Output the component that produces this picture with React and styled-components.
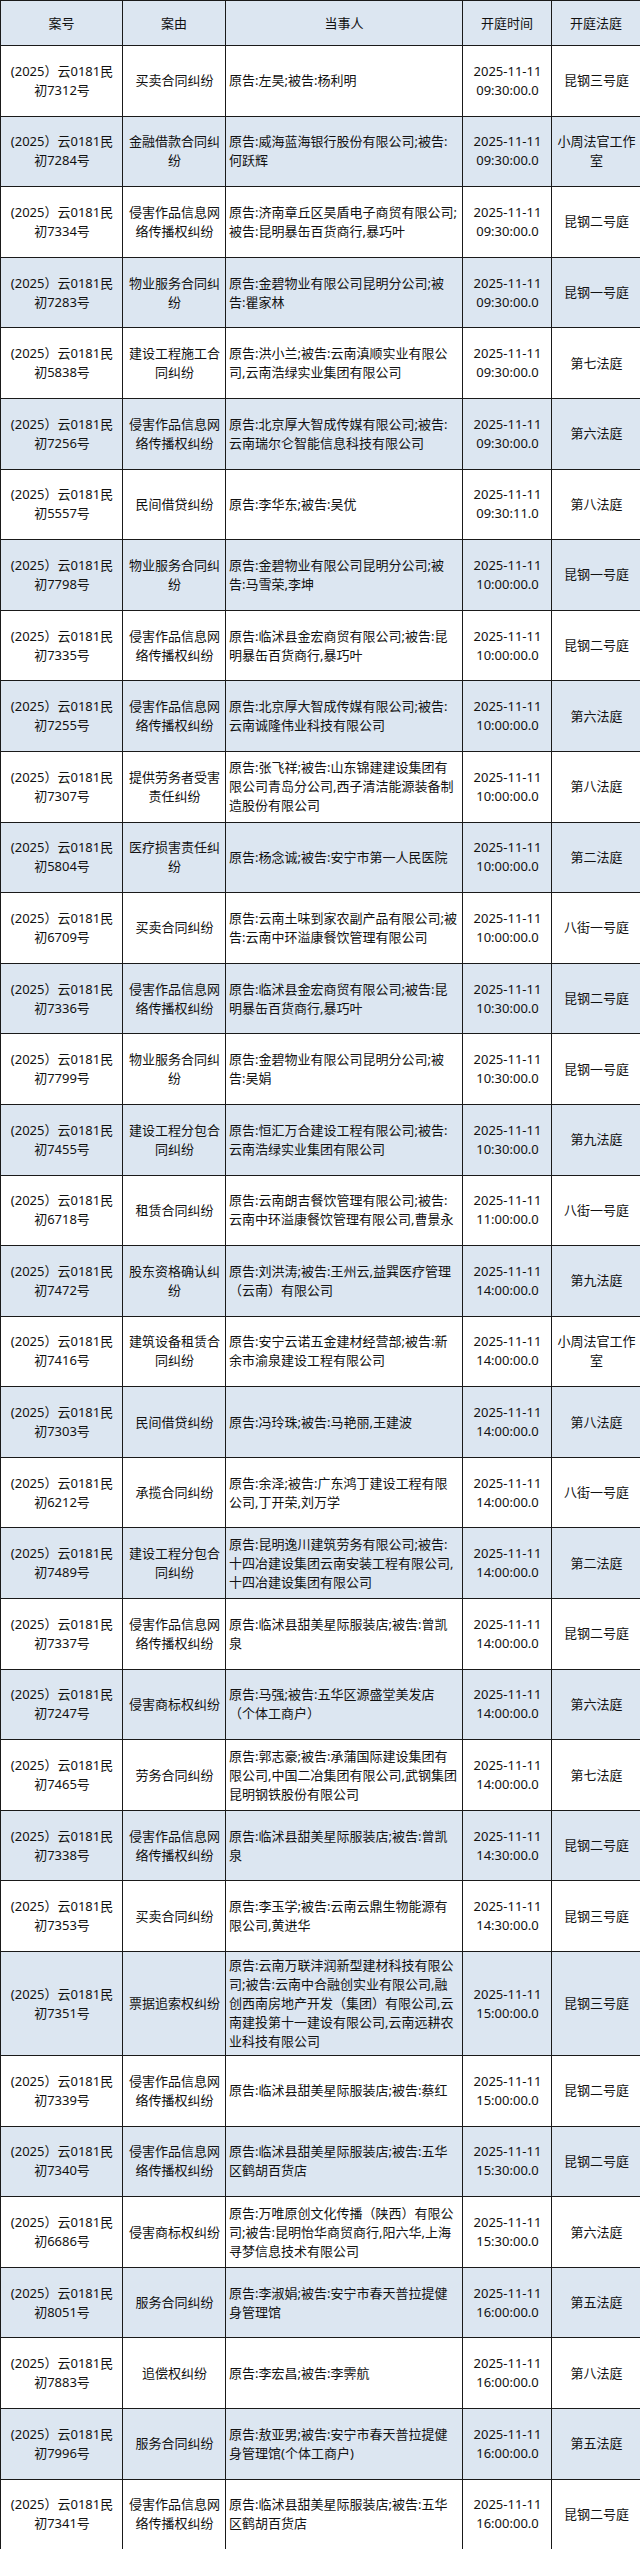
import React from 'react';
import styled, {createGlobalStyle} from 'styled-components';

const GlobalStyle = createGlobalStyle`
  body {
    margin: 0;
    background: #ffffff;
  }
`;

const Table = styled.table`
  width: 640px;
  border-collapse: collapse;
  table-layout: fixed;
  font-family: "Noto Sans", "Noto Sans CJK SC", sans-serif;
  font-size: 13px;
  line-height: 19px;
  color: #111111;
`;

const Col = styled.col`
  width: ${(p) => p.$w}px;
`;

const HeadRow = styled.tr`
  height: 45px;
  background: #dce6f1;
`;

const HeadCell = styled.th`
  border: 1px solid #1a1a1a;
  font-weight: normal;
  text-align: center;
  padding: 0 3px;
`;

const Row = styled.tr`
  height: 70.6px;
  background: ${(p) => (p.$alt ? '#dce6f1' : '#ffffff')};
`;

const Cell = styled.td`
  border: 1px solid #1a1a1a;
  padding: 4px 2px 4px 3px;
  text-align: ${(p) => p.$align || 'center'};
  vertical-align: middle;
  white-space: pre-line;
  word-break: break-all;
`;

const rows = [
  ['7312', '买卖合同纠纷', '原告:左昊;被告:杨利明', '09:30:00.0', '昆钢三号庭'],
  ['7284', '金融借款合同纠纷', '原告:威海蓝海银行股份有限公司;被告:\n何跃辉', '09:30:00.0', '小周法官工作室'],
  ['7334', '侵害作品信息网络传播权纠纷', '原告:济南章丘区昊盾电子商贸有限公司;\n被告:昆明暴缶百货商行,暴巧叶', '09:30:00.0', '昆钢二号庭'],
  ['7283', '物业服务合同纠纷', '原告:金碧物业有限公司昆明分公司;被\n告:瞿家林', '09:30:00.0', '昆钢一号庭'],
  ['5838', '建设工程施工合同纠纷', '原告:洪小兰;被告:云南滇顺实业有限公\n司,云南浩绿实业集团有限公司', '09:30:00.0', '第七法庭'],
  ['7256', '侵害作品信息网络传播权纠纷', '原告:北京厚大智成传媒有限公司;被告:\n云南瑞尔仑智能信息科技有限公司', '09:30:00.0', '第六法庭'],
  ['5557', '民间借贷纠纷', '原告:李华东;被告:吴优', '09:30:11.0', '第八法庭'],
  ['7798', '物业服务合同纠纷', '原告:金碧物业有限公司昆明分公司;被\n告:马雪荣,李坤', '10:00:00.0', '昆钢一号庭'],
  ['7335', '侵害作品信息网络传播权纠纷', '原告:临沭县金宏商贸有限公司;被告:昆\n明暴缶百货商行,暴巧叶', '10:00:00.0', '昆钢二号庭'],
  ['7255', '侵害作品信息网络传播权纠纷', '原告:北京厚大智成传媒有限公司;被告:\n云南诚隆伟业科技有限公司', '10:00:00.0', '第六法庭'],
  ['7307', '提供劳务者受害责任纠纷', '原告:张飞祥;被告:山东锦建建设集团有\n限公司青岛分公司,西子清洁能源装备制\n造股份有限公司', '10:00:00.0', '第八法庭'],
  ['5804', '医疗损害责任纠纷', '原告:杨念诚;被告:安宁市第一人民医院', '10:00:00.0', '第二法庭'],
  ['6709', '买卖合同纠纷', '原告:云南土味到家农副产品有限公司;被\n告:云南中环溢康餐饮管理有限公司', '10:00:00.0', '八街一号庭'],
  ['7336', '侵害作品信息网络传播权纠纷', '原告:临沭县金宏商贸有限公司;被告:昆\n明暴缶百货商行,暴巧叶', '10:30:00.0', '昆钢二号庭'],
  ['7799', '物业服务合同纠纷', '原告:金碧物业有限公司昆明分公司;被\n告:吴娟', '10:30:00.0', '昆钢一号庭'],
  ['7455', '建设工程分包合同纠纷', '原告:恒汇万合建设工程有限公司;被告:\n云南浩绿实业集团有限公司', '10:30:00.0', '第九法庭'],
  ['6718', '租赁合同纠纷', '原告:云南朗吉餐饮管理有限公司;被告:\n云南中环溢康餐饮管理有限公司,曹景永', '11:00:00.0', '八街一号庭'],
  ['7472', '股东资格确认纠纷', '原告:刘洪涛;被告:王州云,益巽医疗管理\n（云南）有限公司', '14:00:00.0', '第九法庭'],
  ['7416', '建筑设备租赁合同纠纷', '原告:安宁云诺五金建材经营部;被告:新\n余市渝泉建设工程有限公司', '14:00:00.0', '小周法官工作室'],
  ['7303', '民间借贷纠纷', '原告:冯玲珠;被告:马艳丽,王建波', '14:00:00.0', '第八法庭'],
  ['6212', '承揽合同纠纷', '原告:余泽;被告:广东鸿丁建设工程有限\n公司,丁开荣,刘万学', '14:00:00.0', '八街一号庭'],
  ['7489', '建设工程分包合同纠纷', '原告:昆明逸川建筑劳务有限公司;被告:\n十四冶建设集团云南安装工程有限公司,\n十四冶建设集团有限公司', '14:00:00.0', '第二法庭'],
  ['7337', '侵害作品信息网络传播权纠纷', '原告:临沭县甜美星际服装店;被告:曾凯\n泉', '14:00:00.0', '昆钢二号庭'],
  ['7247', '侵害商标权纠纷', '原告:马强;被告:五华区源盛堂美发店\n（个体工商户）', '14:00:00.0', '第六法庭'],
  ['7465', '劳务合同纠纷', '原告:郭志豪;被告:承蒲国际建设集团有\n限公司,中国二冶集团有限公司,武钢集团\n昆明钢铁股份有限公司', '14:00:00.0', '第七法庭'],
  ['7338', '侵害作品信息网络传播权纠纷', '原告:临沭县甜美星际服装店;被告:曾凯\n泉', '14:30:00.0', '昆钢二号庭'],
  ['7353', '买卖合同纠纷', '原告:李玉学;被告:云南云鼎生物能源有\n限公司,黄进华', '14:30:00.0', '昆钢三号庭'],
  ['7351', '票据追索权纠纷', '原告:云南万联沣润新型建材科技有限公\n司;被告:云南中合融创实业有限公司,融\n创西南房地产开发（集团）有限公司,云\n南建投第十一建设有限公司,云南远耕农\n业科技有限公司', '15:00:00.0', '昆钢三号庭'],
  ['7339', '侵害作品信息网络传播权纠纷', '原告:临沭县甜美星际服装店;被告:蔡红', '15:00:00.0', '昆钢二号庭'],
  ['7340', '侵害作品信息网络传播权纠纷', '原告:临沭县甜美星际服装店;被告:五华\n区鹤胡百货店', '15:30:00.0', '昆钢二号庭'],
  ['6686', '侵害商标权纠纷', '原告:万唯原创文化传播（陕西）有限公\n司;被告:昆明怡华商贸商行,阳六华,上海\n寻梦信息技术有限公司', '15:30:00.0', '第六法庭'],
  ['8051', '服务合同纠纷', '原告:李淑娟;被告:安宁市春天普拉提健\n身管理馆', '16:00:00.0', '第五法庭'],
  ['7883', '追偿权纠纷', '原告:李宏昌;被告:李霁航', '16:00:00.0', '第八法庭'],
  ['7996', '服务合同纠纷', '原告:敖亚男;被告:安宁市春天普拉提健\n身管理馆(个体工商户)', '16:00:00.0', '第五法庭'],
  ['7341', '侵害作品信息网络传播权纠纷', '原告:临沭县甜美星际服装店;被告:五华\n区鹤胡百货店', '16:00:00.0', '昆钢二号庭'],
];

export default function App() {
  return (
    <>
      <GlobalStyle />
      <Table>
        <colgroup>
          <Col $w={122} />
          <Col $w={103} />
          <Col $w={237} />
          <Col $w={89} />
          <Col $w={89} />
        </colgroup>
        <thead>
          <HeadRow>
            <HeadCell>案号</HeadCell>
            <HeadCell>案由</HeadCell>
            <HeadCell>当事人</HeadCell>
            <HeadCell>开庭时间</HeadCell>
            <HeadCell>开庭法庭</HeadCell>
          </HeadRow>
        </thead>
        <tbody>
          {rows.map(([no, reason, parties, time, court], i) => (
            <Row key={no} $alt={i % 2 === 1}>
              <Cell>{`(2025）云0181民\n初${no}号`}</Cell>
              <Cell>{reason}</Cell>
              <Cell $align="left">{parties}</Cell>
              <Cell>{`2025-11-11\n${time}`}</Cell>
              <Cell>{court}</Cell>
            </Row>
          ))}
        </tbody>
      </Table>
    </>
  );
}
